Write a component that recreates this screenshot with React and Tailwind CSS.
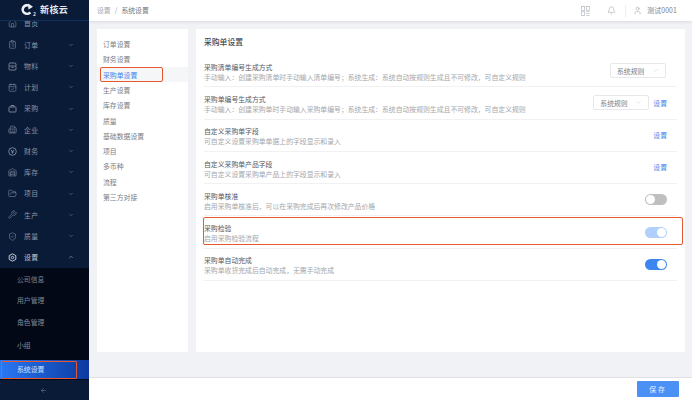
import {
  Home, ClipboardList, CalendarCheck, Building2, Warehouse,
  FolderOpen, Wrench, ShieldCheck, ChevronDown, ChevronUp, ArrowLeft, Bell, User,
} from 'lucide-react'

const FONT = 'font-["Noto_Sans_CJK_SC","Noto_Sans",sans-serif]'

// small hand drawn icons where lucide has no close match
const MaterialIcon = () => (
  <svg width="9" height="9" viewBox="0 0 9 9" fill="none" stroke="currentColor" strokeWidth="0.8" className="mr-[6px] shrink-0">
    <path d="M1 4V2.2C1 1.5 1.5 1 2.2 1h4.6C7.5 1 8 1.5 8 2.2V4" />
    <rect x="1" y="4" width="7" height="4" rx="1" />
    <path d="M3.5 5.5h2" />
  </svg>
)
const BagIcon = () => (
  <svg width="9" height="9" viewBox="0 0 9 9" fill="none" stroke="currentColor" strokeWidth="0.8" className="mr-[6px] shrink-0">
    <rect x="1" y="3" width="7" height="5" rx="0.6" />
    <path d="M3 3V1.5h3V3" />
  </svg>
)
const YenIcon = () => (
  <svg width="9" height="9" viewBox="0 0 9 9" fill="none" stroke="currentColor" strokeWidth="0.8" className="mr-[6px] shrink-0">
    <circle cx="4.5" cy="4.5" r="3.8" />
    <path d="M3 2.8l1.5 2 1.5-2M4.5 4.8v1.8M3.3 5h2.4" />
  </svg>
)
const GearIcon = () => (
  <svg width="9" height="9" viewBox="0 0 9 9" fill="none" stroke="currentColor" strokeWidth="1" className="mr-[6px] shrink-0">
    <path d="M4.5 0.8L7.8 2.6V6.4L4.5 8.2L1.2 6.4V2.6Z" strokeLinejoin="round" />
    <circle cx="4.5" cy="4.5" r="1.2" />
  </svg>
)
const GridIcon = () => (
  <svg width="9" height="10" viewBox="0 0 9 10" fill="none" stroke="currentColor" strokeWidth="0.7">
    <rect x="0.5" y="0.5" width="3.2" height="3.8" />
    <rect x="5.3" y="0.5" width="3.2" height="3.8" />
    <rect x="0.5" y="5.7" width="3.2" height="3.8" />
    <path d="M5.3 5.7h3.2M5.3 7.5h3.2M5.3 9.5h3.2" />
  </svg>
)

const lucideIcon = (Icon) => () => <Icon size={9} strokeWidth={1.4} className="mr-[6px] shrink-0" />

const NAV = [
  { label: '首页', icon: lucideIcon(Home), plain: true },
  { label: '订单', icon: lucideIcon(ClipboardList) },
  { label: '物料', icon: MaterialIcon },
  { label: '计划', icon: lucideIcon(CalendarCheck) },
  { label: '采购', icon: BagIcon },
  { label: '企业', icon: lucideIcon(Building2) },
  { label: '财务', icon: YenIcon },
  { label: '库存', icon: lucideIcon(Warehouse) },
  { label: '项目', icon: lucideIcon(FolderOpen) },
  { label: '生产', icon: lucideIcon(Wrench) },
  { label: '质量', icon: lucideIcon(ShieldCheck) },
]

const MENU = ['订单设置', '财务设置', '采购单设置', '生产设置', '库存设置', '质量', '基础数据设置', '项目', '多币种', '流程', '第三方对接']

const ROWS = [
  { title: '采购清单编号生成方式', desc: '手动输入：创建采购清单时手动输入清单编号；系统生成：系统自动按规则生成且不可修改，可自定义规则', select: true, pad: true },
  { title: '采购单编号生成方式', desc: '手动输入：创建采购单时手动输入采购单编号；系统生成：系统自动按规则生成且不可修改，可自定义规则', select: true, link: true },
  { title: '自定义采购单字段', desc: '可自定义设置采购单单据上的字段显示和录入', link: true },
  { title: '自定义采购单产品字段', desc: '可自定义设置采购单产品上的字段显示和录入', link: true },
  { title: '采购单核准', desc: '启用采购单核准后，可以在采购完成后再次修改产品价格', toggle: 'off' },
  { title: '采购检验', desc: '启用采购检验流程', toggle: 'light', marked: true },
  { title: '采购单自动完成', desc: '采购单收货完成后自动完成，无需手动完成', toggle: 'on' },
]

function NavItem({ item }) {
  const Icon = item.icon
  return (
    <div className="flex h-[21.25px] shrink-0 items-center pl-[8px] pr-[15px] text-[6.85px] text-[#8d96a6]">
      <span className="flex text-[#8f98a8]"><Icon /></span>
      <span className="flex-1 pl-[1px] tracking-[0.3px]">{item.label}</span>
      {!item.plain && <ChevronDown size={6} strokeWidth={2} className="text-[#7d8798]" />}
    </div>
  )
}

function Sidebar() {
  return (
    <aside className="flex h-full w-[89px] shrink-0 flex-col bg-[#0a1b38]">
      <div className="relative z-10 flex h-[21px] shrink-0 items-center border-b border-[#12305f] bg-[#0a1b38] pl-[21px]">
        <svg width="12" height="14" viewBox="0 0 12 14">
          <path d="M8 2.7A4.3 4.3 0 1 0 9.3 9.3" fill="none" stroke="#eef1f5" strokeWidth="2.6" />
          <path d="M7 0.5L12 3.8L7.5 6.5Z" fill="#eef1f5" />
        </svg>
        <span className="mt-[8px] mr-[4px] w-[3px] text-[5px] leading-[6px] font-bold text-[#dfe4ec]">2</span>
        <span className="text-[9px] font-bold tracking-[0.4px] text-[#e4e8ef]">新核云</span>
      </div>
      <div className="-mt-[8px] flex flex-col">
        {NAV.map((item) => (
          <NavItem key={item.label} item={item} />
        ))}
        <div className="flex h-[21.25px] shrink-0 items-center pl-[8px] pr-[15px] text-[6.85px] text-[#c4cad4]">
          <GearIcon />
          <span className="flex-1 pl-[1px] tracking-[0.3px]">设置</span>
          <ChevronUp size={6} strokeWidth={2} />
        </div>
      </div>
      <div className="flex h-[92px] shrink-0 flex-col bg-[#020816] pl-[17px] text-[6.85px] text-[#7f8796]">
        <div className="flex h-[22px] items-center">公司信息</div>
        <div className="flex h-[21px] items-center">用户管理</div>
        <div className="flex h-[23px] items-center">角色管理</div>
        <div className="flex h-[23px] items-center">小组</div>
      </div>
      <div className="relative flex h-[20px] shrink-0 items-center border-b border-[#020816] bg-gradient-to-r from-[#2a78f4] to-[#0c3aa0] pl-[17px] text-[6.85px] text-[#d5e2f8]">
        系统设置
        <div className="absolute left-[1px] top-[1px] h-[18px] w-[76px] rounded-[1px] border-[1.5px] border-[#e8582f]" />
      </div>
      <div className="flex flex-1 items-center justify-center pr-[2px]">
        <ArrowLeft size={7} strokeWidth={1.5} className="text-[#8d96a6]" />
      </div>
    </aside>
  )
}

function TopBar() {
  return (
    <header className="z-10 flex h-[21px] shrink-0 items-center bg-white pl-[8px] pr-[15px] text-[6.85px] shadow-[0_1px_3px_rgba(0,0,0,0.1)]">
      <span className="text-[#a3a7af]">设置</span>
      <span className="mx-[4px] text-[#a3a7af]">/</span>
      <span className="text-[#6f737b]">系统设置</span>
      <div className="flex-1" />
      <span className="text-[#b4b8bf]"><GridIcon /></span>
      <Bell size={9} strokeWidth={1.2} className="ml-[17px] text-[#8a8f98]" />
      <div className="ml-[9px] h-[12px] w-px bg-[#eceef1]" />
      <User size={9} strokeWidth={1.2} className="ml-[7px] text-[#8a8f98]" />
      <span className="ml-[5px] tracking-[0.15px] text-[#7b8089]">测试0001</span>
    </header>
  )
}

function LeftMenu() {
  return (
    <nav className="h-[323px] w-[91px] shrink-0 bg-white pt-[7.5px] text-[6.85px] text-[#787c84]">
      {MENU.map((m) => (
        <div
          key={m}
          className={`relative flex h-[15.3px] items-center pl-[6px] ${m === '采购单设置' ? 'bg-[#f5f6f7] text-[#3f83f0]' : ''}`}
        >
          {m}
          {m === '采购单设置' && (
            <div className="absolute left-[3px] top-0 h-[15px] w-[63px] rounded-[2px] border-[1.5px] border-[#e8582f]" />
          )}
        </div>
      ))}
    </nav>
  )
}

function Select() {
  return (
    <div className="flex h-[15px] w-[56px] items-center justify-between rounded-[2px] border border-[#e6e8eb] pl-[6px] pr-[6px] text-[6.85px] text-[#7b7f87]">
      系统规则
      <ChevronDown size={7} strokeWidth={1.2} className="text-[#b4b8be]" />
    </div>
  )
}

function Toggle({ state }) {
  const on = state !== 'off'
  const bg = state === 'off' ? 'bg-[#bfbfbf]' : state === 'light' ? 'bg-[#b0d0fb]' : 'bg-[#3b86f2]'
  return (
    <div className={`flex h-[11px] w-[22px] items-center rounded-full px-[1px] ${bg} ${on ? 'justify-end' : 'justify-start'}`}>
      <div className="h-[9px] w-[9px] rounded-full bg-white" />
    </div>
  )
}

function Row({ row }) {
  return (
    <div className="relative flex h-[32.3px] items-center justify-between border-b border-[#f0f1f3]">
      <div className="min-w-0 pt-[2px]">
        <div className="text-[6.85px] leading-[10px] text-[#55585f]">{row.title}</div>
        <div className="text-[6.85px] leading-[10px] text-[#a4a7ad]">{row.desc}</div>
      </div>
      <div className={`flex shrink-0 items-center ${row.pad ? 'pr-[11px]' : 'pr-[10px]'}`}>
        {row.select && <Select />}
        {row.link && <span className={`${row.select ? 'ml-[4px]' : ''} text-[6.85px] text-[#3f83f0]`}>设置</span>}
        {row.toggle && <Toggle state={row.toggle} />}
      </div>
      {row.marked && (
        <div className="absolute -left-[1px] top-[1px] h-[28px] w-[480px] rounded-[2px] border-[1.5px] border-[#e8582f]" />
      )}
    </div>
  )
}

function Panel() {
  return (
    <section className="h-[323px] flex-1 bg-white px-[8px]">
      <h2 className="flex h-[26px] items-end pb-[7px] text-[7.8px] font-medium text-[#44474d]">采购单设置</h2>
      {ROWS.map((row) => (
        <Row key={row.title} row={row} />
      ))}
    </section>
  )
}

export default function App() {
  return (
    <div className={`flex h-[400px] w-[692px] overflow-hidden bg-[#f0f2f6] ${FONT}`}>
      <Sidebar />
      <div className="flex min-w-0 flex-1 flex-col">
        <TopBar />
        <main className="flex flex-1 gap-[8px] pl-[8px] pr-[7px] pt-[8px]">
          <LeftMenu />
          <Panel />
        </main>
        <footer className="flex h-[23px] shrink-0 items-center justify-end border-t border-[#dfe1e5] bg-white pr-[13px]">
          <button className="flex h-[16px] w-[42px] items-center justify-center rounded-[1px] bg-[#4a90f5] text-[6.85px] tracking-[2px] text-[#e6f0fe]">
            保存
          </button>
        </footer>
      </div>
    </div>
  )
}
